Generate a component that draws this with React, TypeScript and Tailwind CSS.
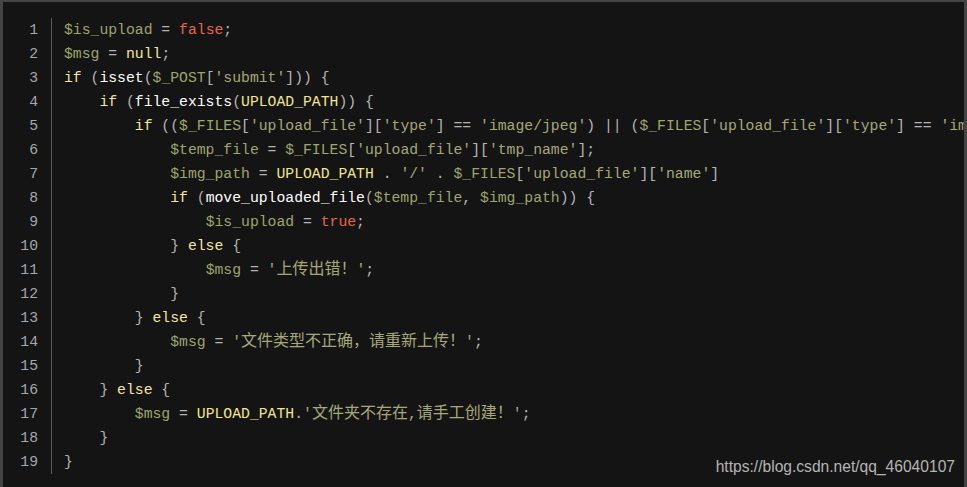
type Tok = [string, string];

const colors: Record<string, string> = {
  v: "text-[#9da66c]",
  k: "text-[#f3e6a0]",
  f: "text-white",
  p: "text-[#b4b4b4]",
  s: "text-[#a6a878]",
  b: "text-[#e2694c]",
  c: "text-[#f2e68e]",
  n: "text-[#f3e6a0]",
  z: "text-[#a6a878] text-[16px]",
};

const lines: Tok[][] = [
  [["v", "$is_upload"], ["p", " = "], ["b", "false"], ["p", ";"]],
  [["v", "$msg"], ["p", " = "], ["n", "null"], ["p", ";"]],
  [["k", "if"], ["p", " ("], ["f", "isset"], ["p", "("], ["v", "$_POST"], ["p", "["], ["s", "'submit'"], ["p", "])) {"]],
  [["p", "    "], ["k", "if"], ["p", " ("], ["f", "file_exists"], ["p", "("], ["c", "UPLOAD_PATH"], ["p", ")) {"]],
  [
    ["p", "        "], ["k", "if"], ["p", " (("], ["v", "$_FILES"], ["p", "["], ["s", "'upload_file'"], ["p", "]["], ["s", "'type'"],
    ["p", "] == "], ["s", "'image/jpeg'"], ["p", ") || ("], ["v", "$_FILES"], ["p", "["], ["s", "'upload_file'"], ["p", "]["],
    ["s", "'type'"], ["p", "] == "], ["s", "'ima"],
  ],
  [["p", "            "], ["v", "$temp_file"], ["p", " = "], ["v", "$_FILES"], ["p", "["], ["s", "'upload_file'"], ["p", "]["], ["s", "'tmp_name'"], ["p", "];"]],
  [["p", "            "], ["v", "$img_path"], ["p", " = "], ["c", "UPLOAD_PATH"], ["p", " . "], ["s", "'/'"], ["p", " . "], ["v", "$_FILES"], ["p", "["], ["s", "'upload_file'"], ["p", "]["], ["s", "'name'"], ["p", "]"]],
  [["p", "            "], ["k", "if"], ["p", " ("], ["f", "move_uploaded_file"], ["p", "("], ["v", "$temp_file"], ["p", ", "], ["v", "$img_path"], ["p", ")) {"]],
  [["p", "                "], ["v", "$is_upload"], ["p", " = "], ["b", "true"], ["p", ";"]],
  [["p", "            } "], ["k", "else"], ["p", " {"]],
  [["p", "                "], ["v", "$msg"], ["p", " = "], ["s", "'"], ["z", "上传出错！"], ["s", "'"], ["p", ";"]],
  [["p", "            }"]],
  [["p", "        } "], ["k", "else"], ["p", " {"]],
  [["p", "            "], ["v", "$msg"], ["p", " = "], ["s", "'"], ["z", "文件类型不正确，请重新上传！"], ["s", "'"], ["p", ";"]],
  [["p", "        }"]],
  [["p", "    } "], ["k", "else"], ["p", " {"]],
  [["p", "        "], ["v", "$msg"], ["p", " = "], ["c", "UPLOAD_PATH"], ["p", "."], ["s", "'"], ["z", "文件夹不存在"], ["s", ","], ["z", "请手工创建！"], ["s", "'"], ["p", ";"]],
  [["p", "    }"]],
  [["p", "}"]],
];

export default function App() {
  return (
    <div className="relative w-[967px] h-[487px] overflow-hidden bg-[#141414] border-t-2 border-l-[3px] border-r-[3px] border-[#444444]">
      <div className="flex pt-[16px] font-['Liberation_Mono','Noto_Sans_CJK_SC',monospace] text-[14.75px]">
        <div className="w-[49px] shrink-0 pr-[13px] text-right text-[#a2a8b0] border-r border-[#5c5c5c]">
          {lines.map((_, i) => (
            <div key={i} className="leading-[24px] h-[24px]">
              {i + 1}
            </div>
          ))}
        </div>
        <div className="pl-[12px] whitespace-pre">
          {lines.map((toks, i) => (
            <div key={i} className="leading-[24px] h-[24px]">
              {toks.map(([t, s], j) => (
                <span key={j} className={colors[t]}>
                  {s}
                </span>
              ))}
            </div>
          ))}
        </div>
      </div>
      <div className="absolute right-[9px] bottom-[9px] font-['Liberation_Sans',Arial,sans-serif] text-[15.6px] text-[#b4b4b4]">
        https://blog.csdn.net/qq_46040107
      </div>
    </div>
  );
}
